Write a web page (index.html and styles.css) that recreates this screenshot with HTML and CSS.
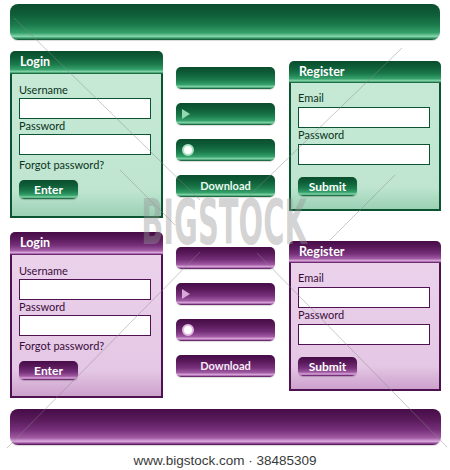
FILE: index.html
```html
<!DOCTYPE html>
<html>
<head>
<meta charset="utf-8">
<link rel="stylesheet" href="styles.css">
</head>
<body>
<div class="page">
  <div class="bar green"></div>

  <div class="row green row-a">
    <div class="panel login">
      <div class="panel-head">Login</div>
      <div class="panel-body">
        <div class="label">Username</div>
        <div class="input"></div>
        <div class="label">Password</div>
        <div class="input"></div>
        <div class="forgot">Forgot password?</div>
        <div class="btn">Enter</div>
      </div>
    </div>
    <div class="buttons">
      <div class="pill"></div>
      <div class="pill"><span class="play"></span></div>
      <div class="pill"><span class="dot"></span></div>
      <div class="pill pill-text">Download</div>
    </div>
    <div class="panel register">
      <div class="panel-head">Register</div>
      <div class="panel-body">
        <div class="label">Email</div>
        <div class="input"></div>
        <div class="label">Password</div>
        <div class="input"></div>
        <div class="btn btn-submit">Submit</div>
      </div>
    </div>
  </div>

  <div class="row purple row-b">
    <div class="panel login">
      <div class="panel-head">Login</div>
      <div class="panel-body">
        <div class="label">Username</div>
        <div class="input"></div>
        <div class="label">Password</div>
        <div class="input"></div>
        <div class="forgot">Forgot password?</div>
        <div class="btn">Enter</div>
      </div>
    </div>
    <div class="buttons">
      <div class="pill"></div>
      <div class="pill"><span class="play"></span></div>
      <div class="pill"><span class="dot"></span></div>
      <div class="pill pill-text">Download</div>
    </div>
    <div class="panel register">
      <div class="panel-head">Register</div>
      <div class="panel-body">
        <div class="label">Email</div>
        <div class="input"></div>
        <div class="label">Password</div>
        <div class="input"></div>
        <div class="btn btn-submit">Submit</div>
      </div>
    </div>
  </div>

  <div class="bar purple bar-bottom"></div>

  <div class="footer">www.bigstock.com · 38485309</div>

  <div class="wm"><span class="wm-text">BIGSTOCK</span></div>
  <svg class="wm-lines" width="450" height="470" viewBox="0 0 450 470">
    <g stroke="#8a8a8a" stroke-width="1" opacity="0.45" fill="none">
      <line x1="14" y1="18" x2="200" y2="200"/>
      <line x1="402" y1="48" x2="250" y2="195"/>
      <line x1="200" y1="252" x2="7" y2="448"/>
      <line x1="257" y1="253" x2="447" y2="447"/>
      <line x1="120" y1="170" x2="175" y2="225"/>
      <line x1="330" y1="240" x2="395" y2="175"/>
    </g>
  </svg>
</div>
</body>
</html>
```

FILE: styles.css
```css
html, body {
  margin: 0;
  padding: 0;
  background: #ffffff;
}

.page {
  position: relative;
  width: 450px;
  height: 470px;
  padding-top: 4px;
  box-sizing: border-box;
  font-family: Lato, "Open Sans", "DejaVu Sans", sans-serif;
  overflow: hidden;
}

.green {
  --dark: #0c5331;
  --grad: linear-gradient(to bottom, #0a4d2d 0%, #0f5f39 30%, #1b7a4b 58%, #34a06a 80%, #86d6ab 90%, #2c8a5a 96%, #0b4a2b 100%);
  --body: linear-gradient(to bottom, #c5e9d5 0%, #bfe5d0 82%, #9bd1b5 100%);
  --text: #0b3320;
  --icon: #93d9b0;
  --ring: #a8e3c2;
  --btntext: #eaf8f0;
}

.purple {
  --dark: #4f1250;
  --grad: linear-gradient(to bottom, #460c47 0%, #5a1a5b 30%, #76307a 58%, #a05aa2 80%, #dcaadd 90%, #8b4290 96%, #470d48 100%);
  --body: linear-gradient(to bottom, #ebd2eb 0%, #e4c7e4 82%, #cda1cd 100%);
  --text: #3a0c3b;
  --icon: #d9a6d9;
  --ring: #e3b8e3;
  --btntext: #f7eaf7;
}

.bar {
  margin: 0 10px;
  height: 36px;
  border-radius: 8px;
  background: var(--grad);
  box-shadow: 0 1px 1px rgba(0, 0, 0, 0.15);
}

.bar-bottom {
  margin: 11px 9px 0 10px;
}

.row {
  display: grid;
  grid-template-columns: 153px 99px 153px;
  column-gap: 13px;
  margin-left: 10px;
  align-items: start;
}

.row .register { margin-left: 1px; }

.row-a { margin-top: 11px; }
.row-b { margin-top: 14px; }

.panel {
  display: flex;
  flex-direction: column;
}

.login { height: 167px; }
.row-b .login { height: 166px; }
.register { height: 150px; margin-top: 10px; }
.row-b .register { margin-top: 9px; }

.panel-head {
  height: 23px;
  line-height: 22px;
  padding-left: 10px;
  background: var(--grad);
  border-radius: 5px 5px 0 0;
  color: #ffffff;
  font-weight: 700;
  font-size: 12.5px;
}

.register .panel-head { height: 22px; }

.panel-body {
  flex: 1;
  background: var(--body);
  border: 2px solid var(--dark);
  border-top: 0;
  padding: 9px 10px 0 7px;
  display: flex;
  flex-direction: column;
  align-items: flex-start;
}

.register .panel-body { padding-top: 8px; }

.label {
  font-size: 11px;
  line-height: 14px;
  height: 14px;
  color: var(--text);
}

.input {
  width: 132px;
  height: 21px;
  box-sizing: border-box;
  background: #ffffff;
  border: 1.5px solid var(--dark);
  margin-top: 1px;
}

.register .input { margin-top: 2px; }

.forgot {
  font-size: 11px;
  line-height: 14px;
  margin-top: 3px;
  color: var(--text);
}

.btn {
  width: 59px;
  height: 19px;
  margin-top: 8px;
  border-radius: 5px;
  background: var(--grad);
  color: #ffffff;
  font-weight: 700;
  font-size: 12px;
  line-height: 19px;
  text-align: center;
  box-shadow: 0 1px 1px rgba(0, 0, 0, 0.2);
}

.btn-submit { margin-top: 12px; }

.buttons {
  display: flex;
  flex-direction: column;
  gap: 14px;
  padding-top: 16px;
}

.row-b .buttons { padding-top: 15px; }

.pill {
  position: relative;
  height: 22px;
  border-radius: 5px;
  background: var(--grad);
  box-shadow: 0 1px 1px rgba(0, 0, 0, 0.15);
}

.pill-text {
  color: var(--btntext);
  font-size: 11px;
  font-weight: 700;
  line-height: 21px;
  text-align: center;
}

.play {
  position: absolute;
  left: 6px;
  top: 6px;
  width: 0;
  height: 0;
  border-top: 5px solid transparent;
  border-bottom: 5px solid transparent;
  border-left: 8px solid var(--icon);
}

.dot {
  position: absolute;
  left: 6px;
  top: 5px;
  width: 8px;
  height: 8px;
  border-radius: 50%;
  background: #ffffff;
  border: 2px solid var(--ring);
}

.footer {
  margin-top: 8px;
  text-align: center;
  font-family: "Liberation Sans", Arial, sans-serif;
  font-size: 13.5px;
  color: #3a3a3a;
  line-height: 16px;
}

.wm {
  position: absolute;
  left: 140px;
  top: 199px;
  width: 168px;
  height: 48px;
  display: flex;
  justify-content: center;
  align-items: center;
  pointer-events: none;
}

.wm-text {
  display: inline-block;
  font-family: "DejaVu Sans", sans-serif;
  font-weight: 700;
  font-size: 63px;
  line-height: 46px;
  color: rgba(150, 150, 150, 0.42);
  transform: scaleX(0.46);
  white-space: nowrap;
}

.wm-lines {
  position: absolute;
  left: 0;
  top: 0;
  pointer-events: none;
}
```
